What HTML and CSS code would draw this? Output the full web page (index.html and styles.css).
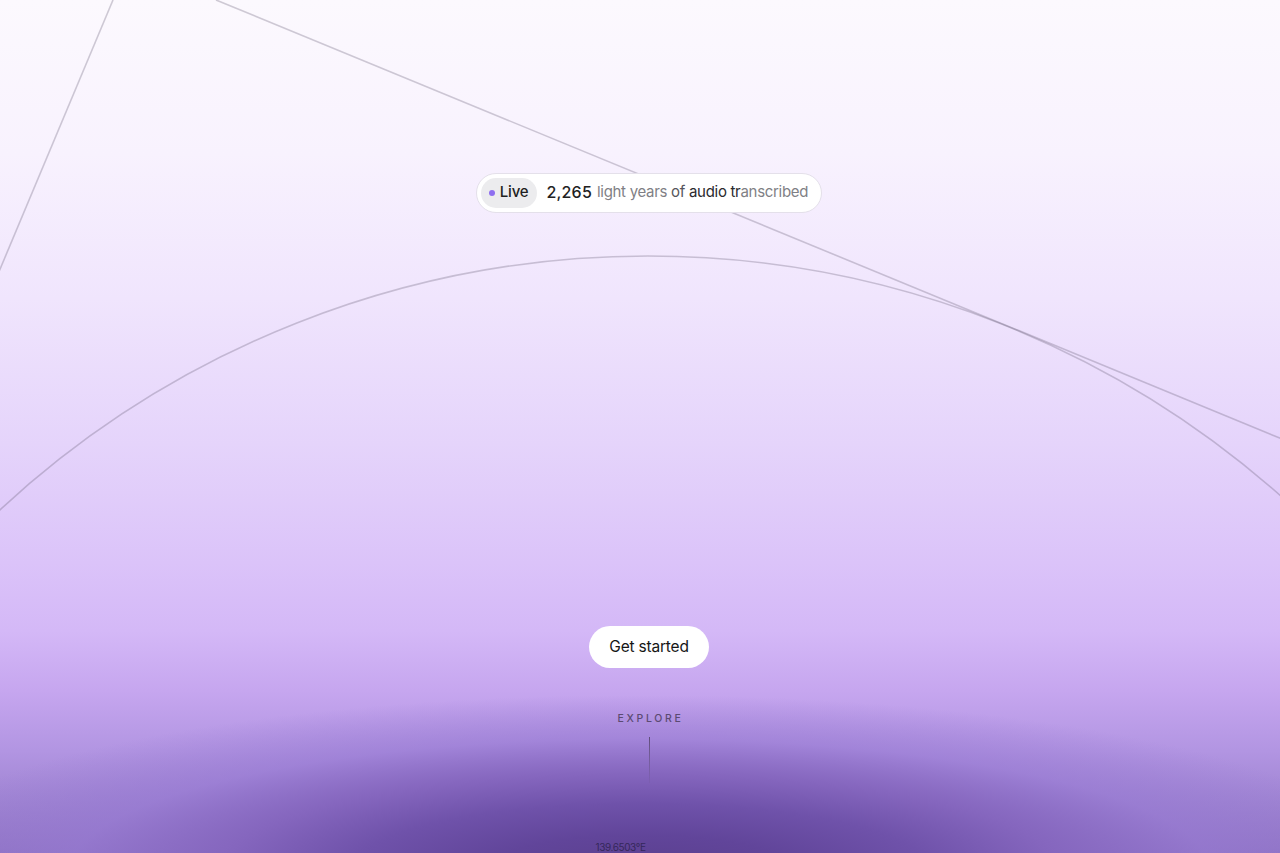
FILE: index.html
```html
<!DOCTYPE html>
<html lang="en">
<head>
<meta charset="utf-8">
<title>Live transcription</title>
<link rel="stylesheet" href="styles.css">
</head>
<body>
<main class="hero">
  <svg class="orbits" width="1280" height="853" viewBox="0 0 1280 853" aria-hidden="true">
    <line x1="113" y1="0" x2="-2" y2="274" class="orbit-line"/>
    <line x1="216" y1="0" x2="1282" y2="439" class="orbit-line"/>
    <circle cx="648" cy="1210" r="954" class="orbit-line"/>
  </svg>
  <div class="stat-pill">
    <span class="live-chip"><span class="live-dot"></span>Live</span>
    <span class="stat-number">2,265</span>
    <span class="stat-text"><span class="t-light">light years</span> <span class="t-mid">of</span> <span class="t-dark">audio</span> <span class="t-dark">tr</span><span class="t-light">anscribed</span></span>
  </div>
  <a class="cta" href="#">Get started</a>
  <div class="explore">
    <span class="explore-label">EXPLORE</span>
    <span class="explore-line"></span>
  </div>
  <div class="coords">139.6503°E</div>
</main>
</body>
</html>
```
FILE: styles.css
```css
* { box-sizing: border-box; }
html, body { margin: 0; padding: 0; }
body {
  width: 1280px;
  height: 853px;
  overflow: hidden;
  font-family: "Inter", "Liberation Sans", sans-serif;
}
.hero {
  position: relative;
  width: 1280px;
  height: 853px;
  display: flex;
  flex-direction: column;
  align-items: center;
  padding-top: 173px;
  padding-left: 18px;
  background:
    radial-gradient(ellipse 760px 175px at 50% 102%, #5a3f8e 0%, #61459a 20%, #6f52aa 38%, #8566be 55%, rgba(150,120,210,0.6) 75%, rgba(180,150,235,0) 100%),
    linear-gradient(to bottom, #fcf9fe 0%, #f8f2fe 18%, #f0e5fd 35%, #e5d4fb 52%, #dbc3f9 66%, #d4b8f7 74%, #c6a6ef 81%, #b295e2 88%, #9f84d2 94%, #8f74c3 100%);
  overflow: hidden;
}
.hero > * { flex-shrink: 0; }
.orbits {
  position: absolute;
  left: 0;
  top: 0;
  pointer-events: none;
}
.orbit-line {
  fill: none;
  stroke: rgba(110, 100, 125, 0.32);
  stroke-width: 1.6;
}
.stat-pill {
  position: relative;
  display: flex;
  align-items: center;
  height: 40px;
  padding: 0 13px 3px 4px;
  background: #fff;
  border: 1px solid #e4e0ea;
  border-radius: 20px;
  font-size: 15px;
}
.live-chip {
  display: flex;
  align-items: center;
  height: 30px;
  padding: 0 9px 0 8px;
  margin-top: 3px;
  background: #ececee;
  border-radius: 15px;
  color: #1f1f22;
  font-weight: 500;
  font-size: 15px;
  letter-spacing: -0.2px;
}
.live-chip { padding-bottom: 3px; }
.live-dot {
  width: 6px;
  height: 6px;
  border-radius: 50%;
  background: #8e6ff0;
  margin-right: 5px;
  margin-top: 3px;
}
.stat-number {
  margin-left: 9px;
  font-size: 16px;
  font-weight: 500;
  color: #222;
  letter-spacing: 0.2px;
}
.stat-text {
  margin-left: 5px;
  font-size: 15px;
  letter-spacing: -0.3px;
}
.t-light { color: #7f7f85; }
.t-mid { color: #56565c; }
.t-dark { color: #2a2a2e; }
.cta {
  position: relative;
  margin-top: 413px;
  display: flex;
  align-items: center;
  justify-content: center;
  width: 120px;
  height: 42px;
  padding-bottom: 2px;
  background: #fff;
  border-radius: 21px;
  color: #151515;
  text-decoration: none;
  font-size: 15.5px;
  letter-spacing: -0.2px;
}
.explore {
  position: relative;
  margin-top: 44px;
  display: flex;
  flex-direction: column;
  align-items: center;
}
.explore-label {
  font-size: 10.5px;
  letter-spacing: 2.7px;
  padding-left: 3px;
  color: #5b4a72;
  font-weight: 500;
}
.explore-line {
  margin-top: 12px;
  width: 1px;
  height: 46px;
  background: linear-gradient(to bottom, #5e4c78 0%, rgba(94,76,120,0.1) 100%);
}
.coords {
  position: relative;
  margin-top: 58px;
  margin-left: -57px;
  font-size: 10px;
  color: #35275a;
  letter-spacing: -0.4px;
}
```
